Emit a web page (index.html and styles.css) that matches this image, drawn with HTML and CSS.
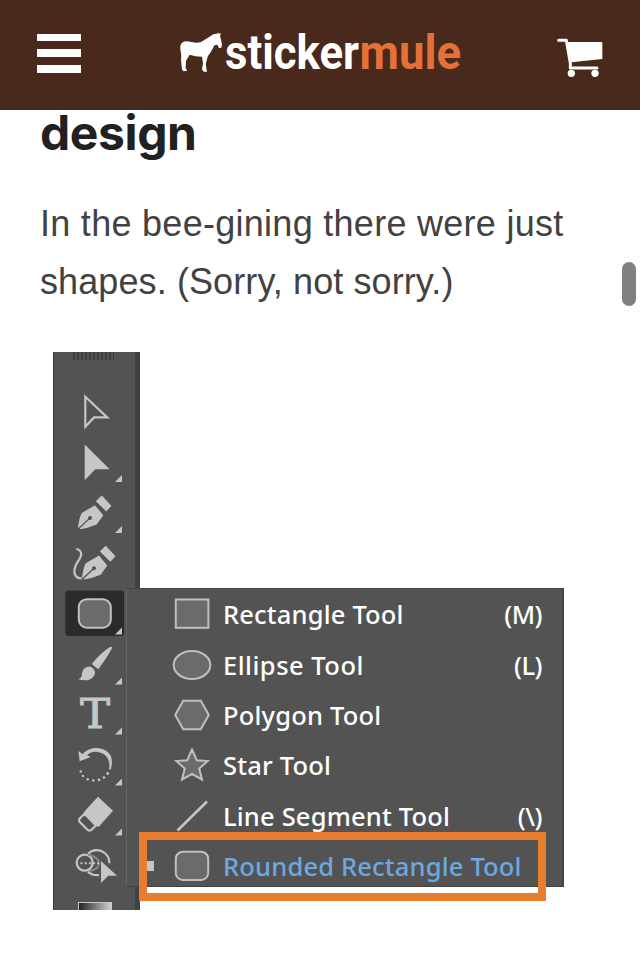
FILE: index.html
```html
<!DOCTYPE html>
<html lang="en">
<head>
<meta charset="utf-8">
<meta name="viewport" content="width=device-width">
<title>Sticker Mule</title>
<link rel="stylesheet" href="styles.css">
</head>
<body>
<header class="header">
  <div class="burger"><span></span><span></span><span></span></div>
  <svg class="logo" viewBox="180 25 282 56">
    <path class="mule" transform="scale(.33333)" d="M541 137Q545 124 560 124L575 126Q590 130 603 126Q620 116 632 108Q640 100 652 101L654 97L657 102L663 98L660 108Q664 120 666 134L664 143L657 144L652 134L643 136Q638 148 630 160Q622 168 621 178Q615 192 619 205L621 215L611 215L606 208L609 190L606 170Q585 170 569 164L558 183L557 205L562 212L551 214L546 209L543 180Q545 160 541 150Z"/>
    <text class="word" x="225" y="69" textLength="134" lengthAdjust="spacingAndGlyphs">sticker</text>
    <text class="word accent" x="359.5" y="69" textLength="101.5" lengthAdjust="spacingAndGlyphs">mule</text>
  </svg>
  <svg class="cart" viewBox="712 114 138 120">
    <path d="M717 121H740L752 190V204H832" fill="none" stroke="#fff" stroke-width="9" stroke-linecap="round" stroke-linejoin="round"/>
    <path d="M740 126H845Q848 126 848 130V177L755 187Z" fill="#fff"/>
    <circle cx="755" cy="220" r="11" fill="#fff"/><circle cx="826" cy="220" r="11" fill="#fff"/>
  </svg>
</header>
<main class="article">
  <h2 class="title">design</h2>
  <p class="copy"><span class="line-one">In the bee-gining there were just</span><br><span class="line-two">shapes. (Sorry, not sorry.)</span></p>
  <div class="figure">
    <div class="toolbar">
      <div class="grip"></div>
      <svg class="tool" viewBox="-42 -25.2 87 50.4"><path class="line-icon" d="M-9.7-15.5L12.3 5.2H-1L-9.7 14.5Z"/></svg>
      <svg class="tool" viewBox="-42 -25.2 87 50.4"><path d="M-10.3-17.6L14.7 7H.3L-10.3 18ZM20 19.7L27 12.7V19.7Z"/></svg>
      <svg class="tool" viewBox="-42 -25.2 87 50.4"><g id="nib"><path d="M-17 14Q-16 5-13.3-.3L0-8L8.3 2L1.7 11.3Q-7 15-15 16Z"/><path d="M6.7-17.3L16-7.3L11.3-2.3L1.3-12Z" stroke="#c6c6c6" stroke-linejoin="round"/><path d="M-16.5 15.5L-5 4.7" stroke="#535353" stroke-width="1.3"/><circle cx="-5" cy="4.7" r="2" fill="#535353"/></g><path d="M20 19.7L27 12.7V19.7Z"/></svg>
      <svg class="tool" viewBox="-42 -25.2 87 50.4"><use href="#nib" x="4" y=".3"/><path class="line-icon" d="M-18.7-14.4C-11-12-14-6-17.5-1C-23 8-21 15-13.3 15.3"/></svg>
      <svg class="tool" viewBox="-42 -25.2 87 50.4"><rect class="selected" x="-29.7" y="-23.8" width="58.7" height="45.7" rx="3"/><rect class="shape" x="-16.2" y="-15" width="32" height="28.5" rx="8"/><path d="M20 20.2L27 13.2V20.2Z"/></svg>
      <svg class="tool" viewBox="-42 -25.2 87 50.4"><path d="M15-17.3Q18-18 16.5-15Q11-5 3.3 5.1L-3.3-.2Q5-11 15-17.3ZM-4.5 2.2Q3 7-1.5 12.2Q-6 18-16.7 15.1Q-13 14-13 9Q-12 2-4.5 2.2ZM20 20.2L27 13.2V20.2Z"/></svg>
      <svg class="tool" viewBox="-42 -25.2 87 50.4"><text class="type" transform="scale(1.1 1)" x="0" y="14">T</text><path d="M20 20.2L27 13.2V20.2Z"/></svg>
      <svg class="tool" viewBox="-42 -25.2 87 50.4"><path d="M-16.7-14.3L-12.5-11.3Q-6-17.5 2-17.2Q21-15 15.8 4.5L14.2 4Q16-12 1-13.5Q-4-14-8-10L-4.3-8.3L-15.3-4ZM20 20.2L27 13.2V20.2Z"/><g><circle cx="-14.3" cy="6.3" r="1.2"/><circle cx="-12" cy="10.7" r="1.2"/><circle cx="-7.3" cy="14" r="1.2"/><circle cx="-1.7" cy="15.3" r="1.3"/><circle cx="4" cy="14.7" r="1.3"/><circle cx="9" cy="12.3" r="1.3"/><circle cx="12.7" cy="8.3" r="1.4"/></g></svg>
      <svg class="tool" viewBox="-42 -25.2 87 50.4"><path d="M3-18.4L18-4.4L3.3 12L-11.3-3ZM20 20.2L27 13.2V20.2Z"/><path class="line-icon" stroke-linejoin="round" d="M-10.5-1.5L-15.5 3.5Q-16.5 5-15.5 6.5L-7 15Q-5.5 16-4 15L1 10.2Z"/></svg>
      <svg class="tool" viewBox="-42 -25.2 87 50.4"><circle class="line-icon" cx="-10.3" cy="-3.5" r="8"/><path class="line-icon" d="M-7-12.5A12.6 12.6 0 0 1 14.3-3M-7 5.5Q-3 9.5 4 8.8"/><path class="dim" d="M-7-11.5Q4-9 4-3Q4 3-6 5"/><path d="M-14.5-3H4" stroke="#c6c6c6" stroke-width="2" stroke-dasharray="2 2.2"/><path d="M6-5.1L22 9.5H13.3L6 16.9Z"/></svg>
      <div class="swatch"></div>
    </div>
    <div class="menu">
      <div class="row"><svg class="glyph" viewBox="-20 -20 40 40"><rect class="shape" x="-16.2" y="-14.5" width="32.6" height="28.3"/></svg><span>Rectangle Tool</span><kbd>(M)</kbd></div>
      <div class="row"><svg class="glyph" viewBox="-20 -20 40 40"><ellipse class="shape" rx="18.3" ry="14"/></svg><span class="ellipse">Ellipse Tool</span><kbd>(L)</kbd></div>
      <div class="row"><svg class="glyph" viewBox="-20 -20 40 40"><path class="shape" d="M-8.8-14.2H8.8L16.8 0L8.8 14.2H-8.8L-16.8 0Z"/></svg><span>Polygon Tool</span></div>
      <div class="row"><svg class="glyph" viewBox="-20 -20 40 40"><path class="shape" d="M0-15.5L4.7-4.8L15.7-4L7.2 3.5L10 14.5L0 9L-10 14.5L-7.2 3.5L-15.7-4L-4.7-4.8Z"/></svg><span>Star Tool</span></div>
      <div class="row"><svg class="glyph" viewBox="-20 -20 40 40"><path d="M-14.5 14.5L15-14.5" stroke="#c6c6c6" stroke-width="2.5"/></svg><span>Line Segment Tool</span><kbd>(\)</kbd></div>
      <div class="row active"><svg class="glyph" viewBox="-20 -20 40 40"><rect class="shape" x="-16.2" y="-14.3" width="32.4" height="28.2" rx="7"/></svg><span>Rounded Rectangle Tool</span></div>
      <div class="callout"></div>
    </div>
  </div>
</main>
<div class="scroll-thumb"></div>
</body>
</html>
```
FILE: styles.css
```css
* { box-sizing: border-box; }
body { margin: 0; height: 959px; overflow: hidden; background: #fff; position: relative; }
svg { display: block; overflow: visible; }

.header { height: 110px; background: #48291b; display: flex; align-items: flex-start; justify-content: space-between; padding: 0 37px; }
.burger { width: 44px; margin-top: 33.5px; display: grid; gap: 8.3px; }
.burger span { height: 7.5px; background: #fff; }
.logo { width: 282px; height: 56px; margin: 25px 0 0 4px; }
.mule { fill: #fff; }
.word { font: 700 49px Roboto, sans-serif; fill: #fff; }
.accent { fill: #e37139; }
.cart { width: 46px; height: 40px; margin-top: 38px; }

.article { padding: 0 40px; }
.title { margin: 0; height: 78px; font: 700 48px/46px Inter, sans-serif; color: #212121; letter-spacing: -.4px; }
.copy { margin: 7px 0 0; height: 116px; font: 36px/58px "Liberation Sans", sans-serif; color: #424242; white-space: nowrap; }
.line-one { letter-spacing: .28px; }
.line-two { letter-spacing: .1px; }

.figure { position: relative; width: 512px; height: 558px; margin: 41px 0 0 13px; }
.toolbar { width: 87px; height: 558px; overflow: hidden; background: #535353; border-left: 1.5px solid #3b3b3b; border-right: 5px solid #404040; }
.grip { width: 41px; height: 8px; margin: 0 0 27px 19px; background: repeating-linear-gradient(90deg, #3d3d3d 0 2px, #535353 2px 4px); }
.tool { width: 87px; height: 50.4px; margin-left: -1px; fill: #c6c6c6; }
.line-icon { fill: none; stroke: #c6c6c6; stroke-width: 2.2; }
.dim { fill: none; stroke: #8b8b8b; stroke-width: 2; }
.shape { fill: #6b6b6b; stroke: #c0c0c0; stroke-width: 2; }
.selected { fill: #2b2b2b; }
.type { font: 41px "DejaVu Serif", serif; text-anchor: middle; stroke: #c6c6c6; stroke-width: .9; }
.swatch { width: 34px; height: 14px; margin: 11px 0 0 24px; border: 1.5px solid #c6c6c6; background: linear-gradient(90deg, #222, #d0d0d0); }

.menu { position: absolute; left: 73px; top: 236px; width: 438px; height: 299px; background: #535353; border: 1.5px solid #444; border-left-color: #636363; border-right: 2px solid #444; }
.row { display: flex; align-items: center; height: 50.4px; padding: 0 20px 0 44.5px; font: 500 25.5px/50px "Noto Sans", "Open Sans", sans-serif; letter-spacing: .18px; color: #fff; white-space: nowrap; }
.ellipse { letter-spacing: .5px; }
.glyph { width: 40px; height: 40px; margin-right: 11.5px; flex: none; }
.row kbd { margin-left: auto; font: inherit; letter-spacing: -.5px; }
.active { color: #6fa8e0; }
.active::before { content: ""; position: absolute; left: 20px; width: 7px; height: 10px; background: #c6c6c6; }
.callout { position: absolute; left: 11.5px; top: 243px; width: 407px; height: 69px; border: 8.5px solid #e87d2f; }
.callout::after { content: ""; position: absolute; inset: auto 0 0; height: 4.5px; background: #fff; }
.scroll-thumb { position: absolute; left: 622px; top: 262px; width: 14px; height: 44px; border-radius: 7px; background: #808080; }
```
